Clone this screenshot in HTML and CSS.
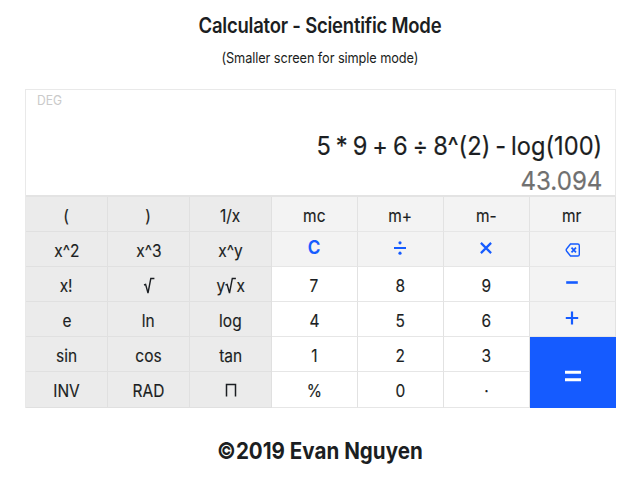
FILE: index.html
```
<!DOCTYPE html>
<html lang="en">
<head>
<meta charset="utf-8">
<title>Calculator</title>
<link rel="stylesheet" href="styles.css">
</head>
<body>
<header>
<h1><span>Calculator - Scientific Mode</span></h1>
<p class="note"><span>(Smaller screen for simple mode)</span></p>
</header>
<main class="calculator">
<section class="display">
<div class="unit"><span>DEG</span></div>
<div class="expression"><span>5 * 9 + 6 ÷ 8^(2) - log(100)</span></div>
<div class="result"><span>43.094</span></div>
</section>
<section class="keys">
<div class="key fn"><span>(</span></div><div class="key fn"><span>)</span></div><div class="key fn"><span>1/x</span></div>
<div class="key mem"><span>mc</span></div><div class="key mem"><span>m+</span></div><div class="key mem"><span>m-</span></div><div class="key mem"><span>mr</span></div>
<div class="key fn"><span>x^2</span></div><div class="key fn"><span>x^3</span></div><div class="key fn"><span>x^y</span></div>
<div class="key op clear"><span>C</span></div>
<div class="key op"><svg width="14" height="16" viewBox="0 0 14 16"><path d="M1 8H13" stroke-width="2"/><circle cx="7" cy="2.8" r="1.6"/><circle cx="7" cy="13.2" r="1.6"/></svg></div>
<div class="key op"><svg width="14" height="16" viewBox="0 0 14 16"><path d="M1.9 2.9L12.1 13.1M12.1 2.9L1.9 13.1" stroke-width="2.2"/></svg></div>
<div class="key op erase"><svg width="16" height="16" viewBox="0 0 16 16"><path d="M5.5 2H12.7Q14.3 2 14.3 3.6V12.4Q14.3 14 12.7 14H5.5L1.7 9.2Q.7 8 1.7 6.8Z" stroke-width="1.4"/><path d="M6.5 5.6L11 10.4M11 5.6L6.5 10.4" stroke-width="1.7"/></svg></div>
<div class="key fn"><span>x!</span></div><div class="key fn"><svg class="root" width="12" height="18" viewBox="0 0 12 18"><path d="M1 8L2.6 7.4L5 16L7.8 1.5H11.4" stroke-width="1.4"/></svg></div><div class="key fn"><span>y</span><svg class="root" width="11" height="18" viewBox="0 0 11 18"><path d="M.5 8L2.1 7.4L4.5 16L7.3 1.5H10.9" stroke-width="1.4"/></svg><span>x</span></div>
<div class="key"><span>7</span></div><div class="key"><span>8</span></div><div class="key"><span>9</span></div>
<div class="key op"><svg width="14" height="16" viewBox="0 0 14 16"><path d="M1.2 7.5H12.8" stroke-width="2.6"/></svg></div>
<div class="key fn"><span>e</span></div><div class="key fn"><span>ln</span></div><div class="key fn"><span>log</span></div>
<div class="key"><span>4</span></div><div class="key"><span>5</span></div><div class="key"><span>6</span></div>
<div class="key op"><svg width="14" height="16" viewBox="0 0 14 16"><path d="M.8 8H13.2M7 1.5V14.5" stroke-width="2.2"/></svg></div>
<div class="key fn"><span>sin</span></div><div class="key fn"><span>cos</span></div><div class="key fn"><span>tan</span></div>
<div class="key"><span>1</span></div><div class="key"><span>2</span></div><div class="key"><span>3</span></div>
<div class="key equals"><svg width="18" height="14" viewBox="0 0 18 14"><path d="M1 3.2H17M1 10.8H17" stroke-width="3"/></svg></div>
<div class="key fn"><span>INV</span></div><div class="key fn"><span>RAD</span></div><div class="key fn product"><svg width="12" height="14" viewBox="0 0 12 14"><path d="M1.5 13.5V1.5H10.5V13.5" stroke-width="1.5"/></svg></div>
<div class="key"><span>%</span></div><div class="key"><span>0</span></div><div class="key"><span>·</span></div>
</section>
</main>
<footer><span>©2019 Evan Nguyen</span></footer>
</body>
</html>
```
FILE: styles.css
```
* { box-sizing: border-box; }
body {
  margin: 0;
  height: 480px;
  overflow: hidden;
  background: #fff;
  color: #1b1e22;
  font-family: Inter, "Liberation Sans", sans-serif;
}
span { display: inline-block; white-space: pre; transform: scaleX(.88); }
header { height: 89px; padding-top: 12px; text-align: center; }
h1 { margin: 0; font-size: 21px; line-height: 28px; font-weight: 600; letter-spacing: -.25px; }
.note { margin: 8px 0 0; font-size: 14.5px; line-height: 20px; letter-spacing: -.1px; }
.calculator { width: 591px; margin-left: 25px; border: 1px solid #e9e9e9; border-bottom: 0; border-right: 0; }
.display {
  height: 107px;
  border-right: 1px solid #e9e9e9;
  border-bottom: 2px solid #e3e3e3;
  padding: 1px 13px 0 11px;
  text-align: right;
}
.unit { height: 18px; line-height: 18px; font-size: 13px; text-align: left; color: #cacaca; }
.unit span { transform: scaleX(.93); transform-origin: left; }
.expression { height: 36px; margin-top: 19px; font-size: 25.5px; line-height: 36px; word-spacing: -1.8px; font-feature-settings: "calt" 0; }
.result { height: 34px; font-size: 26px; line-height: 34px; color: #707070; }
.expression span, .result span { transform: scaleX(.927); transform-origin: right; }
.expression span, .result span { -webkit-text-stroke: .2px currentColor; }
.keys {
  display: grid;
  grid-template-columns: 82px 82px 82px 86px 86px 86px 86px;
  grid-template-rows: repeat(5, 35px) 36px;
}
.key {
  display: flex;
  align-items: center;
  justify-content: center;
  padding: 3px 1px 0 0;
  border-right: 1px solid #e2e2e2;
  border-bottom: 1px solid #e6e6e6;
  font-size: 17px;
  line-height: 24px;
  font-feature-settings: "calt" 0;
}
.key span { transform: scaleX(.91); -webkit-text-stroke: .15px currentColor; }
.fn { background: #ebebeb; border-color: #e0e0e0; padding-right: 0; }
.mem, .op { background: #f3f3f3; }
.op { color: #155bff; padding-top: 0; padding-bottom: 3px; }
.clear { font-size: 19px; font-weight: 600; }
.key.clear span { transform: scaleX(.9); }
.erase { padding: 2px 0 0; }
.product { padding-top: 1px; }
.equals { grid-row: span 2; background: #155bff; color: #fff; border: 0; padding-top: 7px; }
svg { fill: none; stroke: currentColor; }
svg circle { fill: currentColor; stroke: none; }
footer { margin-top: 26px; text-align: center; font-size: 23px; line-height: 34px; font-weight: 700; }
footer span { transform: scaleX(.895); }
```
